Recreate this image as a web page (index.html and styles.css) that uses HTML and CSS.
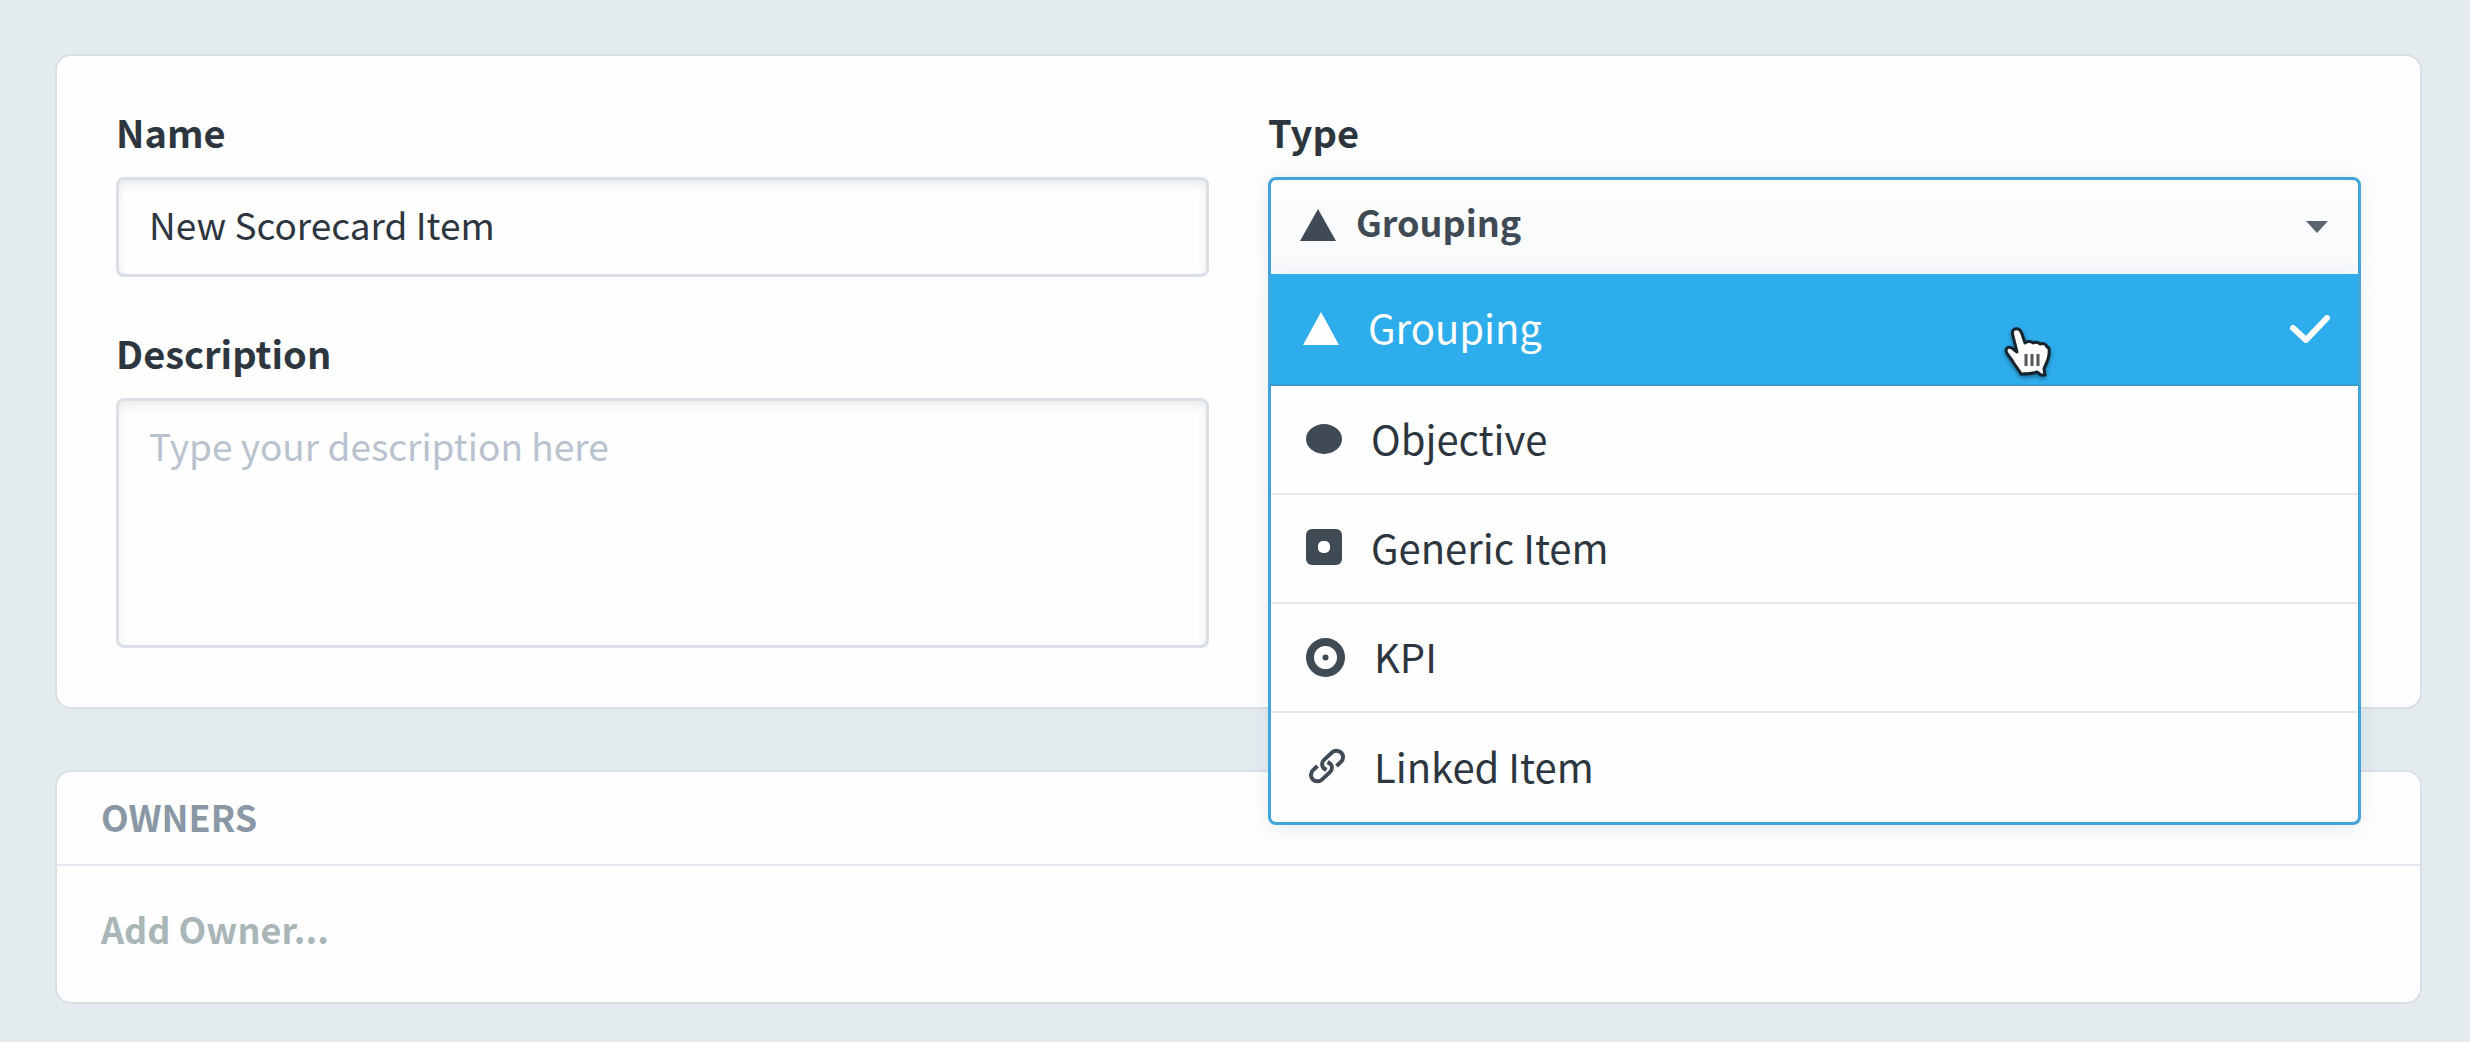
FILE: index.html
```
<!DOCTYPE html>
<html lang="en">
<head>
  <meta charset="UTF-8">
  <meta name="viewport" content="width=device-width, initial-scale=1">
  <title>New Scorecard Item</title>
  <link rel="stylesheet" href="styles.css">
</head>
<body>

  <main>
    <!-- Item details -->
    <form class="card details">
      <div class="column">
        <div class="field">
          <label for="item-name">Name</label>
          <input class="control" type="text" id="item-name" value="New Scorecard Item">
        </div>
        <div class="field">
          <label for="item-description">Description</label>
          <textarea class="control" id="item-description" placeholder="Type your description here"></textarea>
        </div>
      </div>

      <div class="column">
        <div class="field">
          <label for="item-type">Type</label>
          <div class="type-picker">
            <select id="item-type">
              <option selected>Grouping</option>
              <option>Objective</option>
              <option>Generic Item</option>
              <option>KPI</option>
              <option>Linked Item</option>
            </select>
            <svg class="picker-icon" width="36" height="32" viewBox="0 0 36 32"><path d="M18 0L36 32H0z" fill="currentColor"/></svg>
            <svg class="picker-arrow" width="22" height="12" viewBox="0 0 22 12"><path d="M0 0h22L11 12z" fill="currentColor"/></svg>

            <!-- Open menu -->
            <div class="type-menu" role="listbox" aria-label="Type">
              <button type="button" class="type-option active" role="option" aria-selected="true">
                <svg width="36" height="34" viewBox="0 0 36 34"><path d="M18 0L36 33H0z" fill="currentColor"/></svg>
                <span>Grouping</span>
                <svg class="check" width="40" height="28" viewBox="0 0 40 28"><path d="M3 13l13 12L37 3" fill="none" stroke="currentColor" stroke-width="6" stroke-linecap="round" stroke-linejoin="round"/></svg>
                <!-- Hand pointer over the hovered option -->
                <svg class="pointer" width="48" height="54" viewBox="0 0 48 54">
                  <path d="M11 3c4-1 6 2 7 5l3 9c2-2 6-2 8 0 2-1 5-1 7 1 3-1 6 0 7 3 3 0 2 5 2 8-1 7-4 10-5 14l1 6h-4l-4-3c-5 2-11 2-16 2-2-4-5-7-8-12-2-4-6-7-7-11 0-4 4-5 7-2l4 3-4-16c-1-3-1-6 2-7z" fill="#fff" stroke="#16222c" stroke-width="3" stroke-linejoin="round"/>
                  <path d="M22 28v12M28 28v12M34 28v12" fill="none" stroke="#555" stroke-width="3"/>
                </svg>
              </button>
              <button type="button" class="type-option" role="option" aria-selected="false">
                <svg width="36" height="34" viewBox="0 0 36 34"><ellipse cx="18" cy="16" rx="18" ry="15" fill="currentColor"/></svg>
                <span>Objective</span>
              </button>
              <button type="button" class="type-option" role="option" aria-selected="false">
                <svg width="36" height="40" viewBox="0 0 36 40"><rect width="36" height="36" rx="6" fill="currentColor"/><rect x="12" y="12" width="12" height="12" rx="5" fill="#fff"/></svg>
                <span>Generic Item</span>
              </button>
              <button type="button" class="type-option" role="option" aria-selected="false">
                <svg width="39" height="39" viewBox="0 0 39 39"><circle cx="19.5" cy="19.5" r="15.5" fill="none" stroke="currentColor" stroke-width="8"/><circle cx="19.5" cy="19.5" r="3" fill="currentColor"/></svg>
                <span>KPI</span>
              </button>
              <button type="button" class="type-option" role="option" aria-selected="false">
                <svg width="39" height="39" viewBox="0 0 39 39">
                  <g transform="translate(21 18) rotate(-43)" fill="none" stroke="currentColor" stroke-width="4">
                    <path d="M-7-6.500H-13a6.500 6.500 0 0 0 0 13H-2a6 6 0 0 0 6-6l-1-3"/>
                    <path d="M7 6.500H13a6.500 6.500 0 0 0 0-13H2a6 6 0 0 0-6 6l1 3"/>
                  </g>
                </svg>
                <span>Linked Item</span>
              </button>
            </div>
          </div>
        </div>
      </div>
    </form>

    <!-- Owners -->
    <section class="card owners">
      <h2>Owners</h2>
      <input type="text" class="add-owner" placeholder="Add Owner..." aria-label="Add owner">
    </section>
  </main>

</body>
</html>
```
FILE: styles.css
```
* {
  box-sizing: border-box;
}
body {
  margin: 0;
  padding: 54px 48px 36px 55px;
  background-color: #e4ebee;
  color: #2d363f;
  font-family: "Noto Sans CJK SC", sans-serif;
  font-size: 38px;
}
input,
textarea,
select,
button {
  font: inherit;
  color: inherit;
}
main {
  display: flex;
  flex-direction: column;
  gap: 61px;
}

.card {
  background-color: #fdfefd;
  border: 2px solid #d9dfe5;
  border-radius: 16px;
}

/* Item details */
.details {
  display: flex;
  gap: 59px;
  padding: 48px 59px 59px;
}
.column {
  flex: 1;
  display: flex;
  flex-direction: column;
  gap: 48px;
}
.field {
  display: flex;
  flex-direction: column;
}
label {
  height: 73px;
  font-weight: 600;
  line-height: 56px;
}
.control {
  width: 100%;
  padding: 20px 30px 26px;
  background-color: #fdfefd;
  border: 3px solid #d9dfe5;
  border-radius: 8px;
  box-shadow: inset 0 4px 10px rgba(60, 70, 90, 0.1);
  outline: none;
  font-size: 37px;
  line-height: 48px;
}
input.control {
  height: 100px;
}
textarea.control {
  display: block;
  height: 250px;
  resize: none;
}
::placeholder {
  color: #b9c2cf;
  opacity: 1;
}

/* Type drop-down */
.type-picker {
  position: relative;
}
#item-type {
  display: block;
  width: 100%;
  height: 100px;
  padding: 0 60px 12px 85px;
  appearance: none;
  background: linear-gradient(#fdfefe, #f7f9fb);
  border: 3px solid #41a5d8;
  border-radius: 8px 8px 0 0;
  box-shadow: 0 0 18px rgba(90, 120, 190, 0.14);
  color: #3f4a54;
  font-size: 36px;
  font-weight: 600;
  outline: none;
}
.picker-icon,
.picker-arrow {
  position: absolute;
  pointer-events: none;
}
.picker-icon {
  top: 32px;
  left: 32px;
  color: #3f4a54;
}
.picker-arrow {
  top: 44px;
  right: 33px;
  color: #5c6470;
}
.type-menu {
  position: absolute;
  top: 97px;
  left: 0;
  right: 0;
  z-index: 10;
  overflow: hidden;
  background-color: #fdfefd;
  border: 3px solid #41a5d8;
  border-top: 0;
  border-radius: 0 0 8px 8px;
  box-shadow: 0 4px 18px rgba(90, 120, 190, 0.14);
}
.type-option {
  position: relative;
  display: flex;
  align-items: center;
  gap: 29px;
  width: 100%;
  height: 109px;
  padding: 0 28px 4px 35px;
  background: none;
  border: 0;
  border-bottom: 2px solid #e5e8ee;
  font-size: 40px;
  text-align: left;
  cursor: pointer;
}
.type-option svg {
  margin-top: 4px;
  color: #3f4a54;
}
.type-option:last-child {
  border-bottom: 0;
}
.type-option.active {
  height: 112px;
  padding-left: 32px;
  background-color: #2eadec;
  border-bottom-color: #3c9cc9;
  color: #fdfefd;
}
.type-option.active svg {
  color: #fdfefd;
}
.type-option .check {
  margin-left: auto;
}
.pointer {
  position: absolute;
  top: 48px;
  right: 306px;
  filter: drop-shadow(0 2px 2px rgba(0, 0, 0, 0.4));
}

/* Owners */
.owners h2 {
  margin: 0;
  padding: 16px 44px 20px;
  border-bottom: 2px solid #e5e8ee;
  color: #8a97a5;
  font-size: 36px;
  font-weight: 600;
  line-height: 56px;
  text-transform: uppercase;
}
.add-owner {
  display: block;
  width: 100%;
  padding: 34px 44px 46px;
  background: none;
  border: 0;
  outline: none;
  font-size: 36px;
  font-weight: 600;
  line-height: 56px;
}
.add-owner::placeholder {
  color: #aab5b8;
}
```
